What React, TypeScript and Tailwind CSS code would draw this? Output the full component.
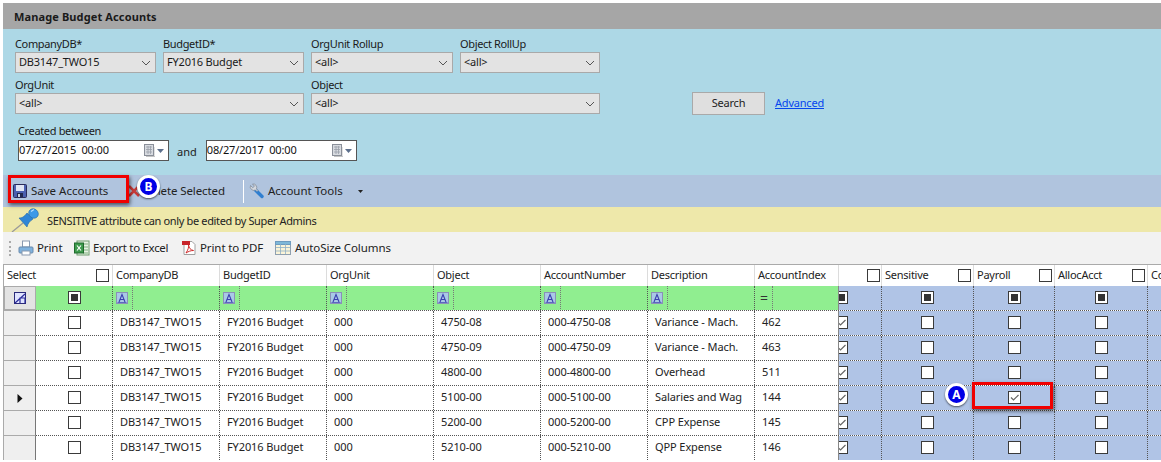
import type { ReactNode } from 'react';

const font = 'font-["Noto_Sans",sans-serif]';

const rows = [
  { obj: '4750-08', acct: '000-4750-08', desc: 'Variance - Mach.', idx: '462' },
  { obj: '4750-09', acct: '000-4750-09', desc: 'Variance - Mach.', idx: '463' },
  { obj: '4800-00', acct: '000-4800-00', desc: 'Overhead', idx: '511' },
  { obj: '5100-00', acct: '000-5100-00', desc: 'Salaries and Wag', idx: '144' },
  { obj: '5200-00', acct: '000-5200-00', desc: 'CPP Expense', idx: '145' },
  { obj: '5210-00', acct: '000-5210-00', desc: 'QPP Expense', idx: '146' },
];

const columns = 'grid grid-cols-[32px_77px_107px_107px_107px_107px_107px_107px_84px_43px_92px_81px_93px_14px]';

function Chevron() {
  return (
    <svg width="10" height="6" viewBox="0 0 10 6" className="shrink-0">
      <path d="M1 1l4 4 4-4" fill="none" stroke="#555" strokeWidth="1" />
    </svg>
  );
}

function Select({ value, className }: { value: string; className: string }) {
  return (
    <div className={`h-[21px] flex items-center justify-between pl-[3px] pr-[4px] bg-[#e3e3e3] border border-[#a9a9a9] text-[11px] tracking-[-0.2px] text-[#1a1a1a] ${className}`}>
      <span>{value}</span>
      <Chevron />
    </div>
  );
}

function Label({ children }: { children: ReactNode }) {
  return <div className="h-[16px] leading-[15px] text-[11px] tracking-[-0.35px] text-[#1a1a1a]">{children}</div>;
}

function DateBox({ value }: { value: string }) {
  return (
    <div className="w-[151px] h-[21px] flex items-center justify-between pl-[0px] pr-[4px] bg-white border border-[#555] text-[11px] tracking-[-0.15px] text-[#111]">
      <span className="whitespace-pre">{value}</span>
      <div className="flex items-center gap-[2px]">
        <svg width="11" height="13" viewBox="0 0 11 13">
          <rect x="0.5" y="0.5" width="9" height="11" fill="#d8dbe0" stroke="#8a8f99" />
          <path d="M2 3h6M2 5.5h6M2 8h6M4 2v8M6.5 2v8" stroke="#9aa0aa" strokeWidth="0.8" />
          <path d="M2 12.5h9V3" fill="none" stroke="#c4c4c4" />
        </svg>
        <svg width="7" height="4" viewBox="0 0 7 4"><path d="M0 0h7L3.5 4z" fill="#5c6f8c" /></svg>
      </div>
    </div>
  );
}

function Box({ state = 'empty' }: { state?: 'empty' | 'mixed' | 'checked' }) {
  return (
    <span className="relative block w-[13px] h-[13px] bg-white border border-[#3a3a3a]">
      {state === 'mixed' && <span className="absolute left-[2px] top-[2px] w-[7px] h-[7px] bg-[#333]" />}
      {state === 'checked' && (
        <svg width="11" height="11" viewBox="0 0 11 11" className="absolute left-0 top-0">
          <path d="M2 5.5l2.500 2.500L9.500 3" fill="none" stroke="#666" strokeWidth="1.200" />
        </svg>
      )}
    </span>
  );
}

function FilterA() {
  return (
    <svg width="12" height="12" viewBox="0 0 12 12">
      <rect x="0.5" y="0.5" width="11" height="11" fill="#a9c9e6" stroke="#8a8fb8" />
      <path d="M3 10L6 2.500 9 10M4.200 7.500h3.600" fill="none" stroke="#3b3fb0" strokeWidth="1.100" />
      <path d="M1.500 10.500h9" stroke="#3b3fb0" strokeWidth="0.700" />
    </svg>
  );
}

function HeaderCell({ children, className = '' }: { children?: ReactNode; className?: string }) {
  return <div className={`h-[21px] flex items-center pl-[3px] text-[11px] tracking-[-0.25px] text-[#222] bg-white border-r border-[#dcdcdc] ${className}`}>{children}</div>;
}

function FilterCell() {
  return (
    <div className="h-[24px] flex items-center bg-[#90ee90] border-r border-dotted border-[#555] pl-[3px] pb-[1px]">
      <FilterA />
      <span className="ml-[4px] h-full border-r border-dotted border-[#777]" />
    </div>
  );
}

function BlueCell({ state, clip = false }: { state: 'empty' | 'mixed' | 'checked'; clip?: boolean }) {
  return (
    <div className={`h-full flex items-center overflow-hidden pb-[1px] bg-[#b0c4e6] border-r border-dotted border-[#555] ${clip ? 'justify-start' : 'justify-center'}`}>
      <span className={clip ? '-ml-[4px]' : ''}><Box state={state} /></span>
    </div>
  );
}

function TextCell({ children }: { children: ReactNode }) {
  return <div className="h-full flex items-center pl-[7px] pb-[2px] overflow-hidden whitespace-nowrap bg-white border-r border-dotted border-[#555] text-[11px] tracking-[-0.1px] text-[#222]">{children}</div>;
}

function Badge({ letter, className }: { letter: string; className: string }) {
  return (
    <div className={`absolute w-[23px] h-[23px] rounded-full bg-[#0000e6] border-[3px] border-white shadow-[0_1px_2px_rgba(0,0,0,0.6)] flex items-center justify-center text-white text-[12px] font-bold ${className}`}>
      {letter}
    </div>
  );
}

export default function App() {
  return (
    <div className={`relative w-[1161px] h-[462px] overflow-hidden bg-white pt-[3px] pl-[3px] ${font}`}>
      <div className="h-[26px] flex items-center pt-[2px] pl-[11px] bg-[#a6a6a6] text-[11px] font-bold tracking-[0.12px] text-[#1a1a1a]">Manage Budget Accounts</div>

      <div className="h-[146px] bg-[#add8e6] pl-[12px] pt-[7px]">
        <div className="flex gap-[7px]">
          <div className="w-[141px]"><Label>CompanyDB*</Label><Select value="DB3147_TWO15" className="w-[141px]" /></div>
          <div className="w-[141px]"><Label>BudgetID*</Label><Select value="FY2016 Budget" className="w-[141px]" /></div>
          <div className="w-[142px]"><Label>OrgUnit Rollup</Label><Select value="<all>" className="w-[142px]" /></div>
          <div className="w-[140px]"><Label>Object RollUp</Label><Select value="<all>" className="w-[140px]" /></div>
        </div>
        <div className="flex gap-[7px] mt-[4px]">
          <div className="w-[289px]"><Label>OrgUnit</Label><Select value="<all>" className="w-[289px]" /></div>
          <div className="w-[289px]"><Label>Object</Label><Select value="<all>" className="w-[289px]" /></div>
          <div className="flex items-center ml-[85px] mt-[15px] h-[23px]">
            <div className="w-[73px] h-[23px] flex items-center justify-center bg-[#dfdfdf] border border-[#a9a9a9] text-[11px] tracking-[-0.2px] text-[#222]">Search</div>
            <span className="ml-[10px] text-[11px] tracking-[-0.2px] text-[#0645ee] underline">Advanced</span>
          </div>
        </div>
        <div className="mt-[8px] ml-[3px]">
          <Label>Created between</Label>
          <div className="flex items-center mt-[1px]">
            <DateBox value="07/27/2015  00:00" />
            <span className="ml-[8px] mr-[9px] mt-[3px] text-[11px] text-[#222]">and</span>
            <DateBox value="08/27/2017  00:00" />
          </div>
        </div>
      </div>

      <div className="h-[32px] flex items-center bg-[#b0c4de] pl-[10px] text-[11.5px] text-[#222]">
        <svg width="14" height="14" viewBox="0 0 14 14">
          <rect x="0.5" y="0.5" width="13" height="13" rx="1" fill="#4a5fb0" stroke="#2a2a5a" />
          <rect x="3" y="1" width="8" height="6" fill="#dfe4f4" />
          <rect x="4" y="9" width="6" height="4" fill="#20284f" />
          <rect x="5" y="10" width="2" height="3" fill="#c7cde0" />
        </svg>
        <span className="ml-[4px] w-[93px] whitespace-nowrap">Save Accounts</span>
        <svg width="14" height="14" viewBox="0 0 14 14" className="ml-[3px]">
          <path d="M2 2l10 10M12 2L2 12" stroke="#c83a3a" strokeWidth="2.500" />
        </svg>
        <span className="ml-[2px] w-[83px] whitespace-nowrap tracking-[-0.1px]">Delete Selected</span>
        <span className="ml-[17px] w-px h-[23px] bg-white" />
        <svg width="16" height="16" viewBox="0 0 16 16" className="ml-[5px]">
          <path d="M6 6.500l7 7" stroke="#2f7fd0" strokeWidth="3.400" strokeLinecap="round" />
          <path d="M1.500 2.500a3.600 3.600 0 0 0 5 4.500L8 8.500 9 7.500 7.500 6A3.600 3.600 0 0 0 3.500 1l2 2.200-1.800 1.500z" fill="#d4d8de" stroke="#7d8794" strokeWidth="0.700" />
        </svg>
        <span className="ml-[3px] w-[76px] whitespace-nowrap">Account Tools</span>
        <svg width="5" height="3" viewBox="0 0 5 3" className="ml-[14px]"><path d="M0 0h5L2.500 3z" fill="#222" /></svg>
      </div>

      <div className="h-[25px] flex items-center bg-[#eee8aa] text-[11px] tracking-[-0.35px] text-[#222]">
        <svg width="30" height="25" viewBox="0 0 30 25" className="ml-[7px] shrink-0">
          <path d="M2 25l11-9" stroke="#9a9a9a" strokeWidth="1.300" />
          <path d="M9 11c3 0 5-1 8-5l6 6c-3 2-5 4-6 8z" fill="#2f86d6" stroke="#2268a8" strokeWidth="0.600" />
          <ellipse cx="23.500" cy="6.500" rx="5" ry="4.500" transform="rotate(40 23.500 6.500)" fill="#3d9ae8" stroke="#2268a8" strokeWidth="0.600" />
          <path d="M21 4.500l3-2" stroke="#b8e0ff" strokeWidth="1.200" />
        </svg>
        <span className="ml-[7px] mt-[3px]">SENSITIVE attribute can only be edited by Super Admins</span>
      </div>

      <div className="h-[32px] flex items-center bg-[#f2f2f2] text-[11.5px] tracking-[-0.1px] text-[#222] pl-[6px]">
        <span className="h-[15px] border-l-2 border-dotted border-[#aaa]" />
        <svg width="16" height="16" viewBox="0 0 16 16" className="ml-[7px] shrink-0">
          <rect x="4.500" y="1" width="7" height="6" fill="#fff" stroke="#8a9ab0" />
          <rect x="1" y="7" width="14" height="6" rx="1" fill="#7fb2de" stroke="#6a8aac" />
          <rect x="4" y="11" width="8" height="4" fill="#fff" stroke="#8a9ab0" />
        </svg>
        <span className="ml-[3px] w-[25px]">Print</span>
        <svg width="16" height="16" viewBox="0 0 16 16" className="ml-[12px] shrink-0">
          <rect x="3" y="1" width="12" height="14" fill="#e8f2e4" stroke="#6f9c6f" />
          <path d="M9 4h5M9 7h5M9 10h5M9 13h5" stroke="#7fb07f" />
          <rect x="0.500" y="3" width="9" height="10" fill="#3d9a4c" stroke="#1f6a2c" />
          <path d="M3 5.500l4 5M7 5.500l-4 5" stroke="#fff" strokeWidth="1.200" />
        </svg>
        <span className="ml-[3px] w-[76px] whitespace-nowrap tracking-[-0.3px]">Export to Excel</span>
        <svg width="16" height="16" viewBox="0 0 16 16" className="ml-[12px] shrink-0">
          <path d="M3 1.500h8l3 3v10H3z" fill="#fff" stroke="#a0a0a0" />
          <rect x="1" y="1" width="8" height="4" fill="#c8242a" />
          <path d="M5 13c2-3 3-6 2.500-8 .5 3 2 5 5 5.500-3 0-5 1-7.500 2.500z" fill="none" stroke="#d02a2a" strokeWidth="1" />
        </svg>
        <span className="ml-[3px] w-[63px] whitespace-nowrap">Print to PDF</span>
        <svg width="16" height="16" viewBox="0 0 16 16" className="ml-[12px] shrink-0">
          <rect x="0.500" y="1.500" width="15" height="13" fill="#fbf4d8" stroke="#8fa0b0" />
          <rect x="0.500" y="1.500" width="15" height="3" fill="#7fb8d8" stroke="#6f9cc0" />
          <path d="M5.500 4v10M10.500 4v10M1 7.500h14M1 11h14" stroke="#8fb0c8" strokeWidth="0.800" />
        </svg>
        <span className="ml-[4px] whitespace-nowrap">AutoSize Columns</span>
      </div>

      <div className="border-t border-[#aaa] border-l border-l-[#aaa]">
        <div className={columns}>
          <HeaderCell className="col-span-2 justify-between pr-[2px]">
            <span>Select</span>
            <span className="mr-[1px]"><Box /></span>
          </HeaderCell>
          <HeaderCell>CompanyDB</HeaderCell>
          <HeaderCell>BudgetID</HeaderCell>
          <HeaderCell>OrgUnit</HeaderCell>
          <HeaderCell>Object</HeaderCell>
          <HeaderCell>AccountNumber</HeaderCell>
          <HeaderCell>Description</HeaderCell>
          <HeaderCell>AccountIndex</HeaderCell>
          <HeaderCell className="justify-end pr-[1px] pl-0"><Box /></HeaderCell>
          <HeaderCell className="justify-between pr-[2px]">Sensitive<Box /></HeaderCell>
          <HeaderCell className="justify-between pr-[2px]">Payroll<Box /></HeaderCell>
          <HeaderCell className="justify-between pr-[2px]">AllocAcct<Box /></HeaderCell>
          <HeaderCell className="border-r-0">Co</HeaderCell>
        </div>
        <div className={`${columns} h-[24px]`}>
          <div className="flex items-center justify-center bg-[#e3e3e3] border border-[#aaa]">
            <svg width="12" height="12" viewBox="0 0 12 12">
              <rect x="0.5" y="0.5" width="11" height="11" fill="#dfe3ff" stroke="#2a2a7a" />
              <path d="M1 11L11 2M6 11V6h5v5" fill="none" stroke="#2a2a9a" strokeWidth="1.200" />
            </svg>
          </div>
          <div className="flex items-center justify-center pb-[1px] bg-[#90ee90] border-r border-dotted border-[#555]"><Box state="mixed" /></div>
          <FilterCell /><FilterCell /><FilterCell /><FilterCell /><FilterCell /><FilterCell />
          <div className="flex items-center bg-[#90ee90] border-r border-[#888] pl-[5px] text-[14px] leading-none text-[#333]">
            <span>=</span>
            <span className="ml-[4px] h-full border-r border-dotted border-[#777]" />
          </div>
          <BlueCell state="mixed" clip />
          <BlueCell state="mixed" /><BlueCell state="mixed" /><BlueCell state="mixed" />
          <div className="bg-[#b0c4e6]" />
        </div>
        {rows.map((row, i) => (
          <div key={row.obj} className={`${columns} h-[25px] border-t border-dotted border-[#555]`}>
            <div className="-mt-px flex items-center justify-center bg-[#efefef] border-t border-[#aaa] border-r border-r-[#777]">
              {i === 3 && <svg width="6" height="9" viewBox="0 0 6 9"><path d="M0.5 0l5 4.500-5 4.500z" fill="#111" /></svg>}
            </div>
            <div className="flex items-center justify-center pb-[1px] bg-white border-r border-dotted border-[#555]"><Box /></div>
            <TextCell>DB3147_TWO15</TextCell>
            <TextCell>FY2016 Budget</TextCell>
            <TextCell>000</TextCell>
            <TextCell>{row.obj}</TextCell>
            <TextCell>{row.acct}</TextCell>
            <TextCell>{row.desc}</TextCell>
            <div className="h-full flex items-center pl-[7px] pb-[2px] bg-white border-r border-[#888] text-[11px] text-[#222]">{row.idx}</div>
            <BlueCell state="checked" clip />
            <BlueCell state="empty" />
            <BlueCell state={i === 3 ? 'checked' : 'empty'} />
            <BlueCell state="empty" />
            <div className="bg-[#b0c4e6]" />
          </div>
        ))}
      </div>

      {/* callouts drawn over the screenshot */}
      <div className="absolute left-[8px] top-[175px] w-[121px] h-[28px] border-[3px] border-[#f00000] shadow-[1px_2px_4px_rgba(0,0,0,0.6)]" />
      <Badge letter="B" className="left-[137px] top-[175px]" />
      <div className="absolute left-[972px] top-[382px] w-[81px] h-[27px] border-[3px] border-[#f00000] shadow-[1px_2px_4px_rgba(0,0,0,0.6)]" />
      <Badge letter="A" className="left-[945px] top-[383px]" />
    </div>
  );
}
